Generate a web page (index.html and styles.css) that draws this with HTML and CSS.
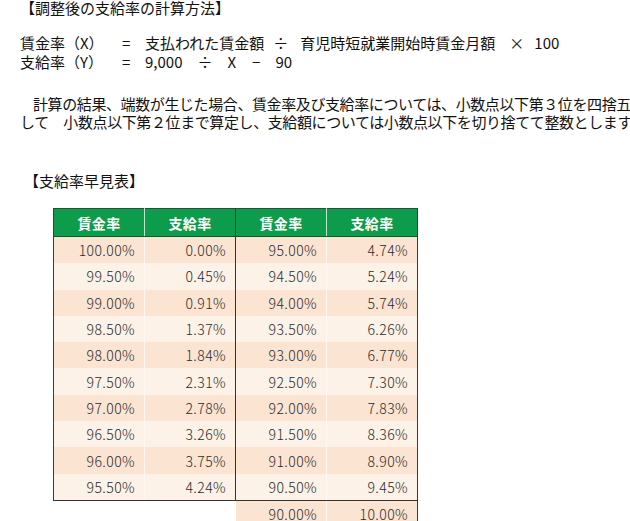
FILE: index.html
```html
<!DOCTYPE html>
<html lang="ja">
<head>
<meta charset="utf-8">
<title>調整後の支給率の計算方法</title>
<link rel="stylesheet" href="styles.css">
</head>
<body>
<div class="page">
  <h2 class="title title-top">【調整後の支給率の計算方法】</h2>

  <div class="formula">
    <div class="frow">
      <span class="f-name">賃金率（X）</span>
      <span class="f-eq">=</span>
      <span class="f-a1">支払われた賃金額</span>
      <span class="f-op1">÷</span>
      <span class="f-a2">育児時短就業開始時賃金月額</span>
      <span class="f-op2">×</span>
      <span class="f-a3">100</span>
    </div>
    <div class="frow">
      <span class="f-name">支給率（Y）</span>
      <span class="f-eq">=</span>
      <span class="f-b1">9,000</span>
      <span class="f-b2">÷</span>
      <span class="f-b3">X</span>
      <span class="f-b4">−</span>
      <span class="f-b5">90</span>
    </div>
  </div>

  <div class="note">
    <p class="nline indent">計算の結果、端数が生じた場合、賃金率及び支給率については、小数点以下第３位を四捨五入</p>
    <p class="nline">して　小数点以下第２位まで算定し、支給額については小数点以下を切り捨てて整数とします。</p>
  </div>

  <h2 class="title title-table">【支給率早見表】</h2>

  <table class="rates">
    <colgroup>
      <col class="col">
      <col class="col">
      <col class="col">
      <col class="col">
    </colgroup>
    <thead>
      <tr>
        <th class="c1">賃金率</th>
        <th class="c2">支給率</th>
        <th class="c3">賃金率</th>
        <th class="c4">支給率</th>
      </tr>
    </thead>
    <tbody>
      <tr class="odd"><td class="c1">100.00%</td><td class="c2">0.00%</td><td class="c3">95.00%</td><td class="c4">4.74%</td></tr>
      <tr class="even"><td class="c1">99.50%</td><td class="c2">0.45%</td><td class="c3">94.50%</td><td class="c4">5.24%</td></tr>
      <tr class="odd"><td class="c1">99.00%</td><td class="c2">0.91%</td><td class="c3">94.00%</td><td class="c4">5.74%</td></tr>
      <tr class="even"><td class="c1">98.50%</td><td class="c2">1.37%</td><td class="c3">93.50%</td><td class="c4">6.26%</td></tr>
      <tr class="odd"><td class="c1">98.00%</td><td class="c2">1.84%</td><td class="c3">93.00%</td><td class="c4">6.77%</td></tr>
      <tr class="even"><td class="c1">97.50%</td><td class="c2">2.31%</td><td class="c3">92.50%</td><td class="c4">7.30%</td></tr>
      <tr class="odd"><td class="c1">97.00%</td><td class="c2">2.78%</td><td class="c3">92.00%</td><td class="c4">7.83%</td></tr>
      <tr class="even"><td class="c1">96.50%</td><td class="c2">3.26%</td><td class="c3">91.50%</td><td class="c4">8.36%</td></tr>
      <tr class="odd"><td class="c1">96.00%</td><td class="c2">3.75%</td><td class="c3">91.00%</td><td class="c4">8.90%</td></tr>
      <tr class="even last"><td class="c1">95.50%</td><td class="c2">4.24%</td><td class="c3">90.50%</td><td class="c4">9.45%</td></tr>
      <tr class="extra"><td class="blank"></td><td class="blank"></td><td class="c3">90.00%</td><td class="c4">10.00%</td></tr>
    </tbody>
  </table>
</div>
</body>
</html>
```

FILE: styles.css
```css
html, body {
  margin: 0;
  padding: 0;
  background: #ffffff;
  overflow: hidden;
}

body {
  width: 630px;
  height: 521px;
  font-family: "Noto Sans CJK JP", "Noto Sans", sans-serif;
  font-size: 15px;
  color: #111111;
}

.page {
  padding-left: 20px;
}

.title {
  margin: 0;
  font-size: 15px;
  font-weight: normal;
  line-height: 19px;
  white-space: nowrap;
}

.title-top {
  margin-top: -2px;
}

.formula {
  margin-top: 16px;
}

.frow {
  display: flex;
  align-items: baseline;
  line-height: 19px;
  white-space: nowrap;
}

.f-name { width: 100px; }
.f-eq { margin-left: 2px; width: 23px; }
.f-op1 { margin-left: 9px; }
.f-a2 { margin-left: 12px; }
.f-op2 { margin-left: 14px; }
.f-a3 { margin-left: 10px; }

.f-b2 { margin-left: 15px; }
.f-b3 { margin-left: 15px; }
.f-b4 { margin-left: 16px; }
.f-b5 { margin-left: 15px; }

.note {
  margin-top: 24px;
}

.nline {
  margin: 0;
  line-height: 18px;
  letter-spacing: -0.4px;
  white-space: nowrap;
}

.indent {
  text-indent: 13px;
}

.title-table {
  margin-top: 40px;
  margin-left: 4px;
}

.rates {
  margin-top: 18px;
  margin-left: 33px;
  width: 364px;
  border-collapse: collapse;
  font-size: 14px;
  letter-spacing: 0.4px;
  table-layout: fixed;
}

.rates .col {
  width: 91px;
}

.rates th,
.rates td {
  white-space: nowrap;
}

.rates th {
  height: 27px;
  padding: 0;
  background: #0d9b4c;
  color: #ffffff;
  font-weight: bold;
  text-align: center;
  border-top: 1px solid #2f4a38;
  border-bottom: 1px solid #0a5a2c;
}

.rates th.c1 { border-left: 1px solid #3a3a3a; border-right: 1px solid #bfe6cc; }
.rates th.c2 { border-right: 1px solid #2c3a30; }
.rates th.c3 { border-right: 1px solid #bfe6cc; }
.rates th.c4 { border-right: 1px solid #3a3a3a; }

.rates td {
  height: 26.3px;
  padding: 0 9px 0 0;
  text-align: right;
  color: #2a2a2a;
  font-weight: 300;
}

.rates tr.odd td { background: #fce4d2; }
.rates tr.even td { background: #fdf2e8; }

.rates td.c1 { border-left: 1px solid #3a3a3a; border-right: 1px solid #fff8f2; }
.rates td.c2 { border-right: 1px solid #333333; }
.rates td.c3 { border-right: 1px solid #fff8f2; }
.rates td.c4 { border-right: 1px solid #3a3a3a; }

.rates tr.last td { border-bottom: 1px solid #333333; }

.rates tr.extra td.c3,
.rates tr.extra td.c4 { background: #fce4d2; }

.rates tr.extra td.blank {
  background: transparent;
  border-left: none;
  border-bottom: none;
}
```
